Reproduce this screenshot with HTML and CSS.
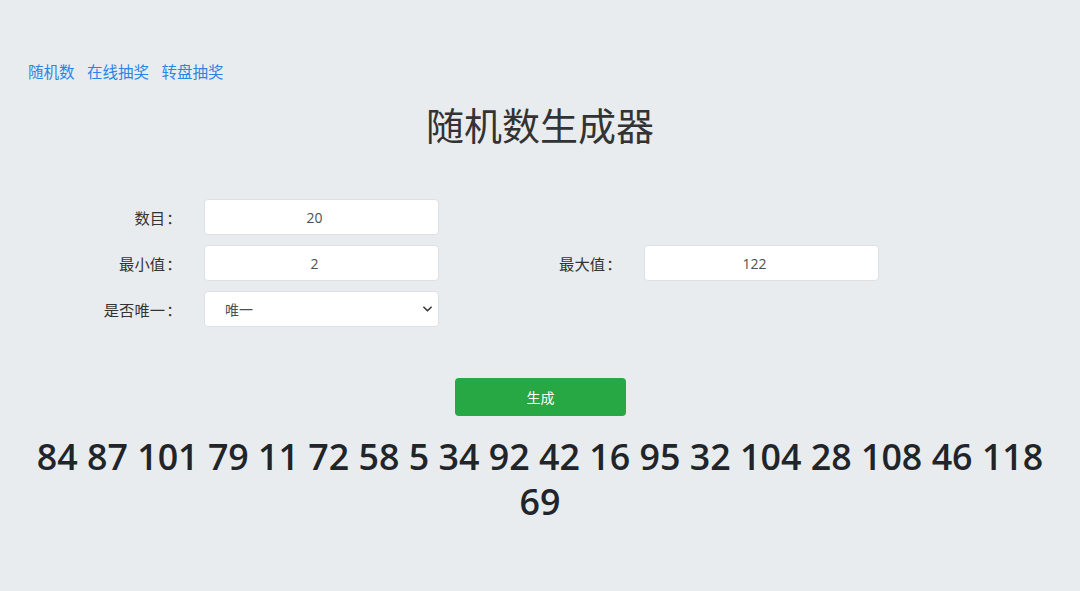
FILE: index.html
```html
<!DOCTYPE html>
<html lang="zh-CN">
<head>
<meta charset="utf-8">
<title>随机数生成器</title>
<link rel="stylesheet" href="styles.css">
</head>
<body>
<nav class="nav">
  <a href="#">随机数</a>
  <a href="#">在线抽奖</a>
  <a href="#">转盘抽奖</a>
</nav>
<h1 class="title">随机数生成器</h1>
<form class="form">
  <label class="label">数目<span class="colon">：</span></label>
  <div class="field"><input class="input" type="text" value="20"></div>
  <div></div><div></div>
  <label class="label">最小值<span class="colon">：</span></label>
  <div class="field"><input class="input" type="text" value="2"></div>
  <label class="label">最大值<span class="colon">：</span></label>
  <div class="field"><input class="input" type="text" value="122"></div>
  <label class="label">是否唯一<span class="colon">：</span></label>
  <div class="field select-wrap">
    <select class="select"><option>唯一</option><option>不唯一</option></select>
    <svg class="chevron" viewBox="0 0 10 6" width="9" height="6"><path d="M1 1l4 4 4-4" fill="none" stroke="#343a40" stroke-width="1.8" stroke-linecap="round" stroke-linejoin="round"/></svg>
  </div>
</form>
<div class="actions"><button class="btn" type="button">生成</button></div>
<div class="result">84 87 101 79 11 72 58 5 34 92 42 16 95 32 104 28 108 46 118 69</div>
</body>
</html>
```
FILE: styles.css
```css
* { box-sizing: border-box; }
body {
  margin: 0;
  background: #e9ecef;
  color: #212529;
  font-family: "Open Sans", "Noto Sans CJK SC", sans-serif;
}
.nav {
  padding: 60px 0 0 28px;
  height: 82px;
  font-size: 15.5px;
  line-height: 22px;
  font-family: "Noto Sans CJK SC", sans-serif;
}
.nav a {
  color: #2b85e4;
  text-decoration: none;
  margin-right: 9px;
}
.title {
  margin: 19px 0 0;
  font-size: 38px;
  line-height: 46px;
  font-weight: 400;
  text-align: center;
  color: #333;
  font-family: "Noto Sans CJK SC", sans-serif;
}
.form {
  margin: 52px 0 0;
  padding-left: 20px;
  display: grid;
  grid-template-columns: 184px 256px 184px 256px;
  grid-auto-rows: 36px;
  row-gap: 10px;
}
.label {
  text-align: right;
  padding-right: 21px;
  font-size: 15.3px;
  line-height: 36px;
  color: #333;
  font-family: "Noto Sans CJK SC", sans-serif;
}
.colon {
  display: inline-block;
  width: 18px;
  text-align: center;
}
.field { width: 235px; height: 36px; }
.input, .select {
  width: 100%;
  height: 36px;
  border: 1px solid #dde1e5;
  border-radius: 4px;
  background: #fff;
  color: #495057;
  font-size: 14px;
  font-family: "Open Sans", "Noto Sans CJK SC", sans-serif;
  outline: none;
}
.input {
  text-align: center;
  padding: 0 19px 0 5px;
}
.select-wrap { position: relative; }
.select {
  appearance: none;
  -webkit-appearance: none;
  padding: 0 28px 0 20px;
  font-family: "Noto Sans CJK SC", sans-serif;
}
.chevron {
  position: absolute;
  right: 7px;
  top: 15px;
  pointer-events: none;
}
.actions {
  margin-top: 51px;
  display: flex;
  justify-content: center;
  padding-left: 1px;
}
.btn {
  width: 171px;
  height: 38px;
  border: none;
  border-radius: 4px;
  background: #28a745;
  color: #fff;
  font-size: 14px;
  font-family: "Noto Sans CJK SC", sans-serif;
}
.result {
  margin-top: 18px;
  padding: 0 20px;
  text-align: center;
  font-size: 35.8px;
  line-height: 45px;
  font-weight: 600;
  color: #212529;
}
```
